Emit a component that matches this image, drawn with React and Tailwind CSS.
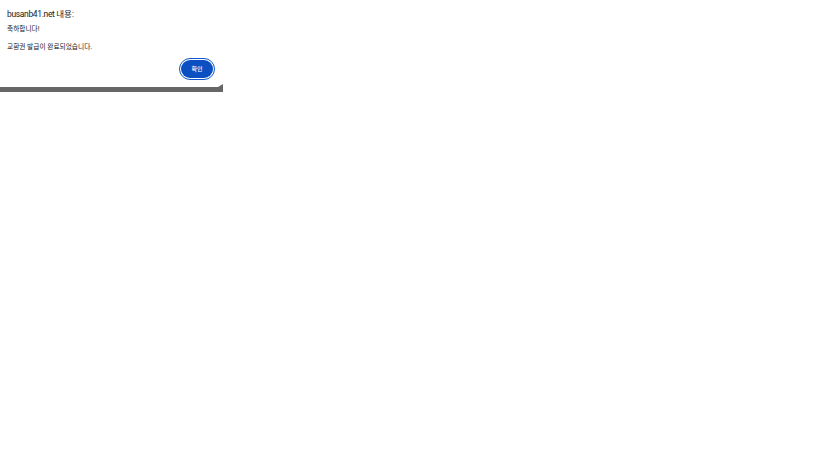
export default function App() {
  return (
    <div className="min-h-screen bg-white font-['Roboto','Noto_Sans_CJK_KR',sans-serif] text-[#202124]">
      <div className="w-[223px] h-[92px] bg-[#666666] [clip-path:polygon(0_87px,218px_87px,223px_84px,223px_92px,0_92px)] absolute top-0 left-0" />
      <div className="relative w-[219px] h-[87px] bg-white rounded-br-[3px] pl-[7px] pr-[6px] pt-[8px]">
        <h1 className="text-[8.5px] leading-[12px] tracking-[-0.35px]">busanb41.net <span className="tracking-normal">내용:</span></h1>
        <p className="text-[6.7px] leading-[8px] mt-[5px]">축하합니다!</p>
        <p className="text-[6.7px] leading-[8px] mt-[10px]">교환권 발급이 완료되었습니다.</p>
        <div className="flex justify-end mt-[8.5px]">
          <button className="w-[32px] h-[18px] rounded-full bg-[#0b4fc0] text-white text-[6px] font-medium leading-none outline outline-[1.5px] outline-[#0b57d0] outline-offset-[1px]">확인</button>
        </div>
      </div>
    </div>
  );
}
